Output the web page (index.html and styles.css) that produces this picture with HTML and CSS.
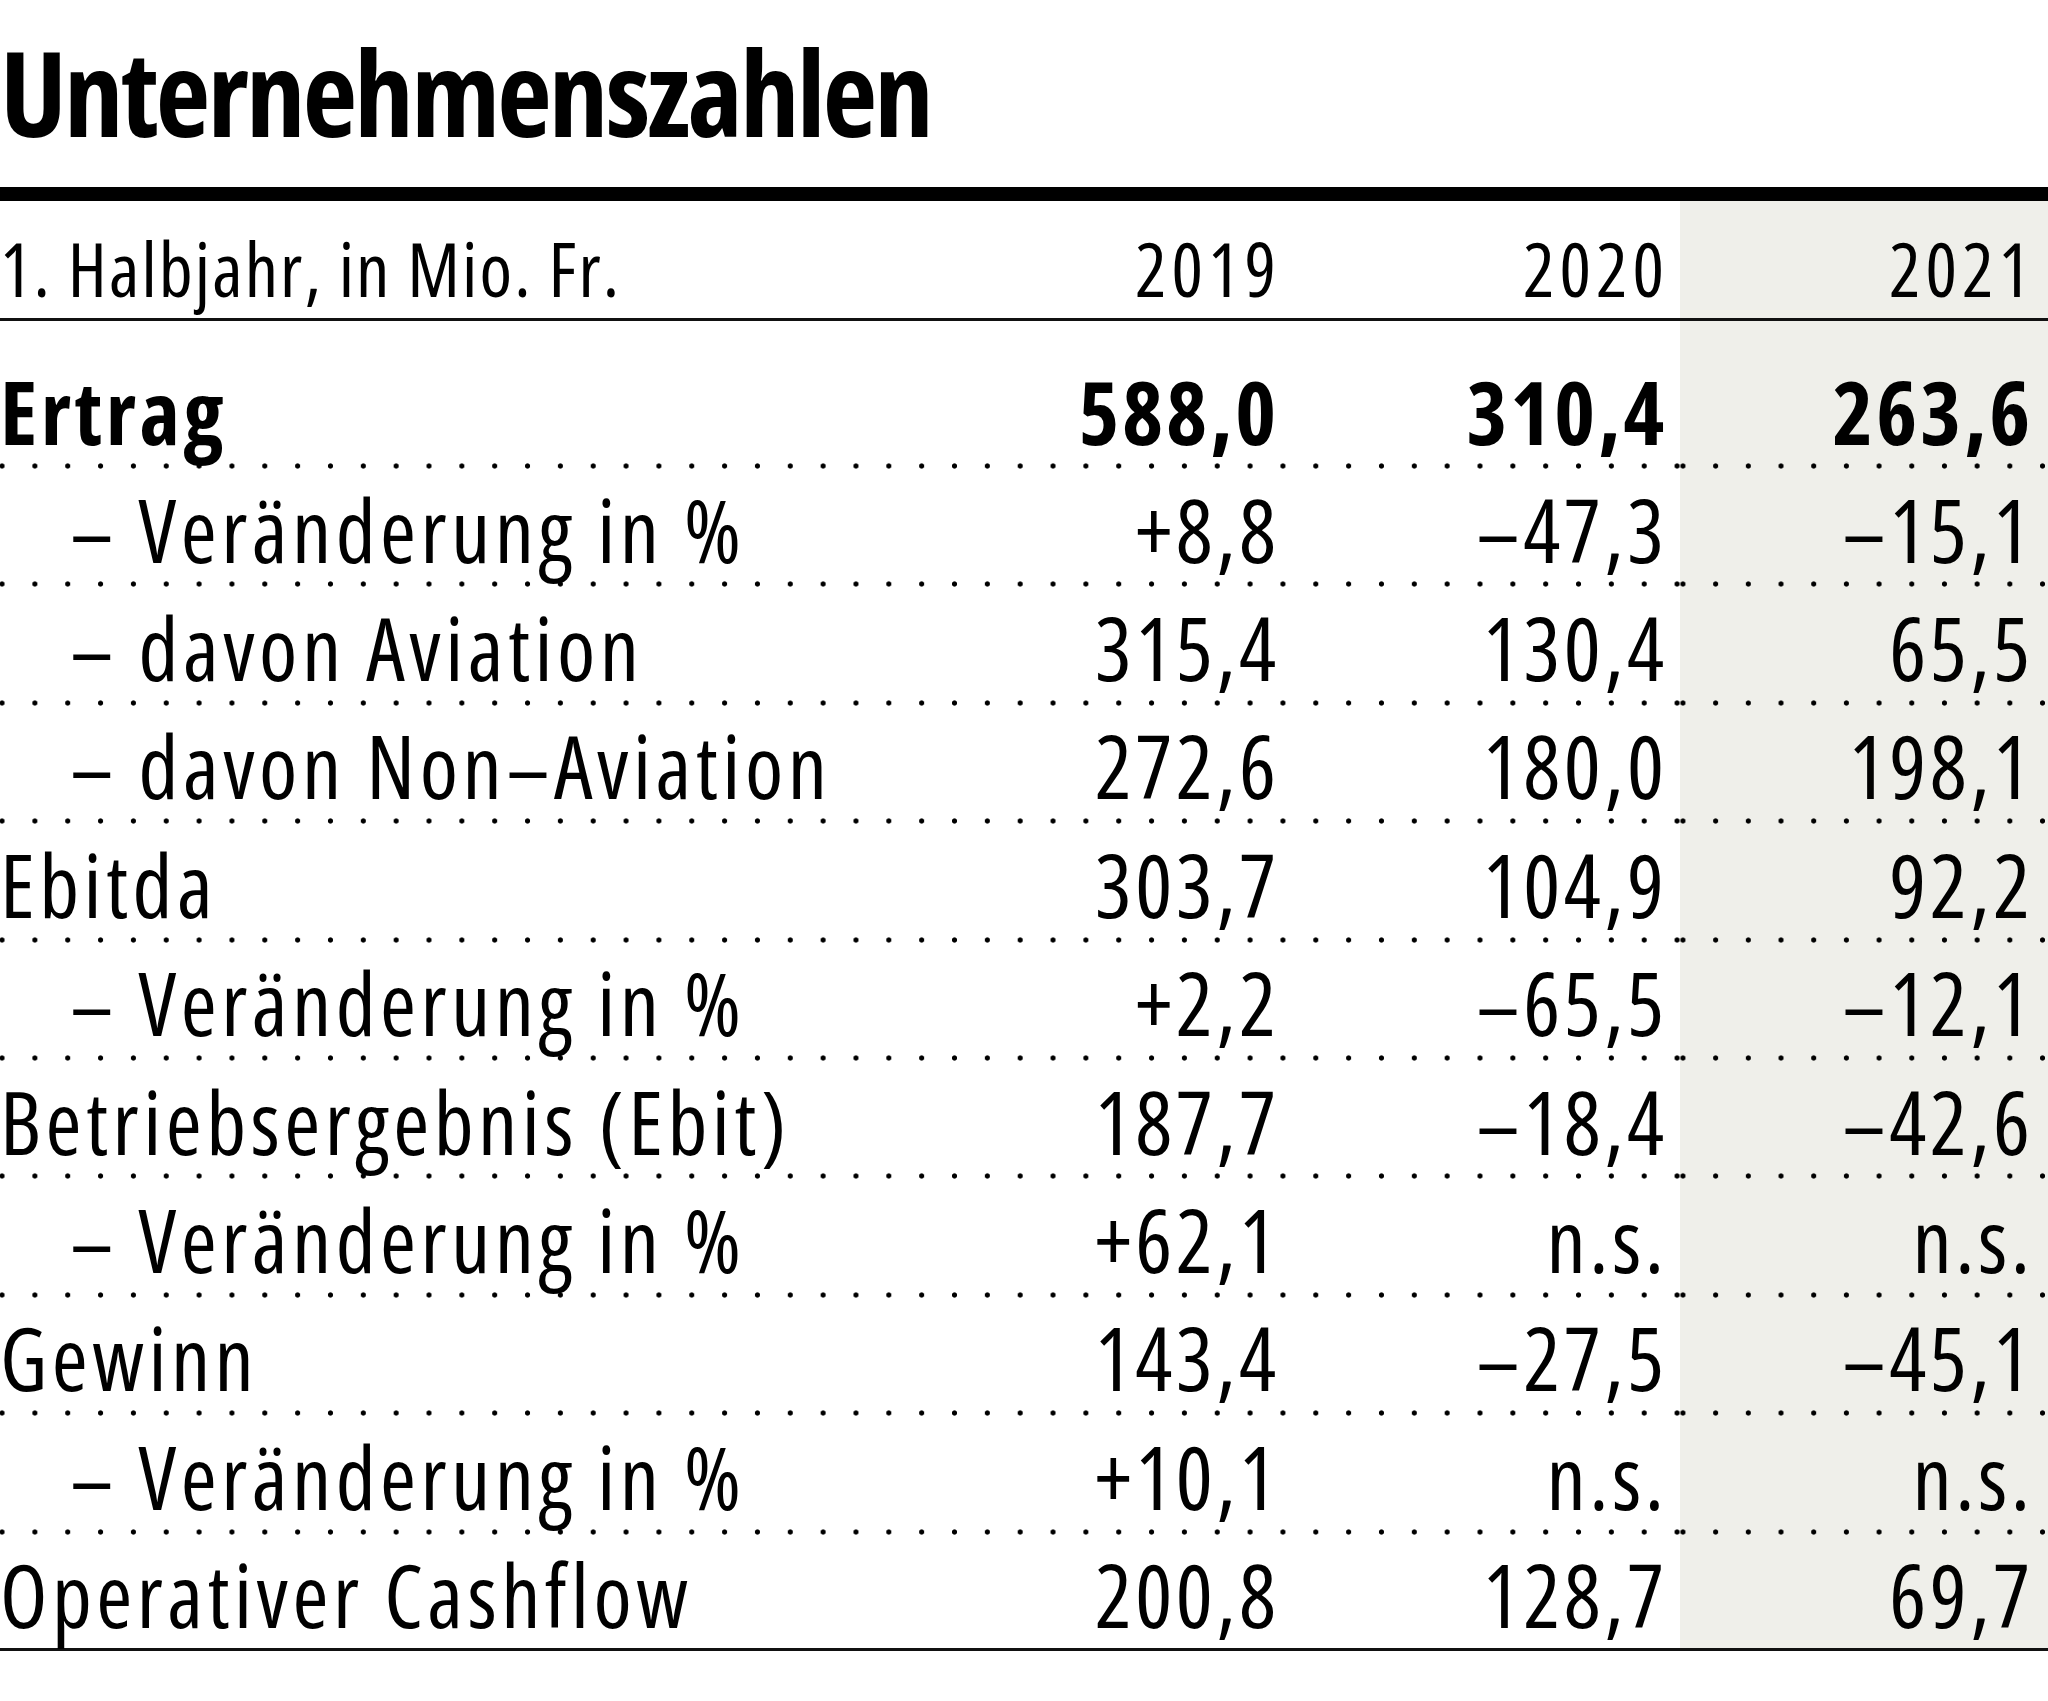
FILE: index.html
```html
<!DOCTYPE html>
<html lang="de">
<head>
<meta charset="utf-8">
<title>Unternehmenszahlen</title>
<link rel="stylesheet" href="styles.css">
</head>
<body>
<h1 class="title">Unternehmenszahlen</h1>
<div class="table">
  <div class="row head">
    <div class="label">1. Halbjahr, in Mio. Fr.</div>
    <div class="num">2019</div>
    <div class="num">2020</div>
    <div class="num hl">2021</div>
  </div>
  <div class="row first dotted">
    <div class="label">Ertrag</div>
    <div class="num">588,0</div>
    <div class="num">310,4</div>
    <div class="num hl">263,6</div>
  </div>
  <div class="row dotted sub">
    <div class="label">– Veränderung in %</div>
    <div class="num">+8,8</div>
    <div class="num">–47,3</div>
    <div class="num hl">–15,1</div>
  </div>
  <div class="row dotted sub">
    <div class="label">– davon Aviation</div>
    <div class="num">315,4</div>
    <div class="num">130,4</div>
    <div class="num hl">65,5</div>
  </div>
  <div class="row dotted sub">
    <div class="label">– davon Non–Aviation</div>
    <div class="num">272,6</div>
    <div class="num">180,0</div>
    <div class="num hl">198,1</div>
  </div>
  <div class="row dotted">
    <div class="label">Ebitda</div>
    <div class="num">303,7</div>
    <div class="num">104,9</div>
    <div class="num hl">92,2</div>
  </div>
  <div class="row dotted sub">
    <div class="label">– Veränderung in %</div>
    <div class="num">+2,2</div>
    <div class="num">–65,5</div>
    <div class="num hl">–12,1</div>
  </div>
  <div class="row dotted">
    <div class="label">Betriebsergebnis (Ebit)</div>
    <div class="num">187,7</div>
    <div class="num">–18,4</div>
    <div class="num hl">–42,6</div>
  </div>
  <div class="row dotted sub">
    <div class="label">– Veränderung in %</div>
    <div class="num">+62,1</div>
    <div class="num">n.s.</div>
    <div class="num hl">n.s.</div>
  </div>
  <div class="row dotted">
    <div class="label">Gewinn</div>
    <div class="num">143,4</div>
    <div class="num">–27,5</div>
    <div class="num hl">–45,1</div>
  </div>
  <div class="row dotted sub">
    <div class="label">– Veränderung in %</div>
    <div class="num">+10,1</div>
    <div class="num">n.s.</div>
    <div class="num hl">n.s.</div>
  </div>
  <div class="row last">
    <div class="label">Operativer Cashflow</div>
    <div class="num">200,8</div>
    <div class="num">128,7</div>
    <div class="num hl">69,7</div>
  </div>
</div>
</body>
</html>
```
FILE: styles.css
```css
* { box-sizing: border-box; }

body {
  margin: 0;
  width: 2048px;
  background: #fff;
  color: #000;
  font-family: "Open Sans", "Liberation Sans", sans-serif;
  font-stretch: 75%;
}

.title {
  margin: 0;
  height: 187px;
  padding-top: 32px;
  font-size: 119px;
  line-height: 119px;
  font-weight: 700;
  letter-spacing: -2.8px;
}

.table {
  border-top: 14px solid #000;
}

.row {
  display: grid;
  grid-template-columns: 904px 388px 388px 368px;
  height: 118.4px;
  font-size: 87px;
  line-height: 87px;
  white-space: nowrap;
}

.row > div {
  padding-top: 16.7px;
}

.label {
  letter-spacing: 4.5px;
}

.num {
  text-align: right;
  letter-spacing: 3.5px;
  padding-right: 12.5px;
}

.num.hl {
  padding-right: 14.5px;
  background-color: #efefea;
}

.sub .label {
  padding-left: 70px;
}

.dotted {
  background-image: radial-gradient(circle at center, #000 2.2px, rgba(0,0,0,0) 3px);
  background-size: 32.85px 6px;
  background-repeat: repeat-x;
  background-position: -14.4px 100%;
}

.dotted .hl {
  background-image: radial-gradient(circle at center, #000 2.2px, rgba(0,0,0,0) 3px);
  background-size: 32.7px 6px;
  background-repeat: repeat-x;
  background-position: -13.4px 100%;
}

.head {
  height: 120px;
  font-size: 74px;
  line-height: 74px;
  border-bottom: 3px solid #111;
}
.head > div {
  padding-top: 31.3px;
}
.head .label {
  letter-spacing: 2.1px;
}
.head .num {
  letter-spacing: 5px;
  padding-right: 11px;
}
.head .num.hl {
  padding-right: 13px;
}

.first {
  height: 148px;
  font-weight: 700;
}
.first > div {
  padding-top: 46.7px;
}
.first .label {
  letter-spacing: 3.6px;
}
.first .num {
  letter-spacing: 3px;
  padding-right: 13px;
}
.first .num.hl {
  padding-right: 15px;
}

.last {
  height: 116.4px;
  border-bottom: 3px solid #111;
}
```
